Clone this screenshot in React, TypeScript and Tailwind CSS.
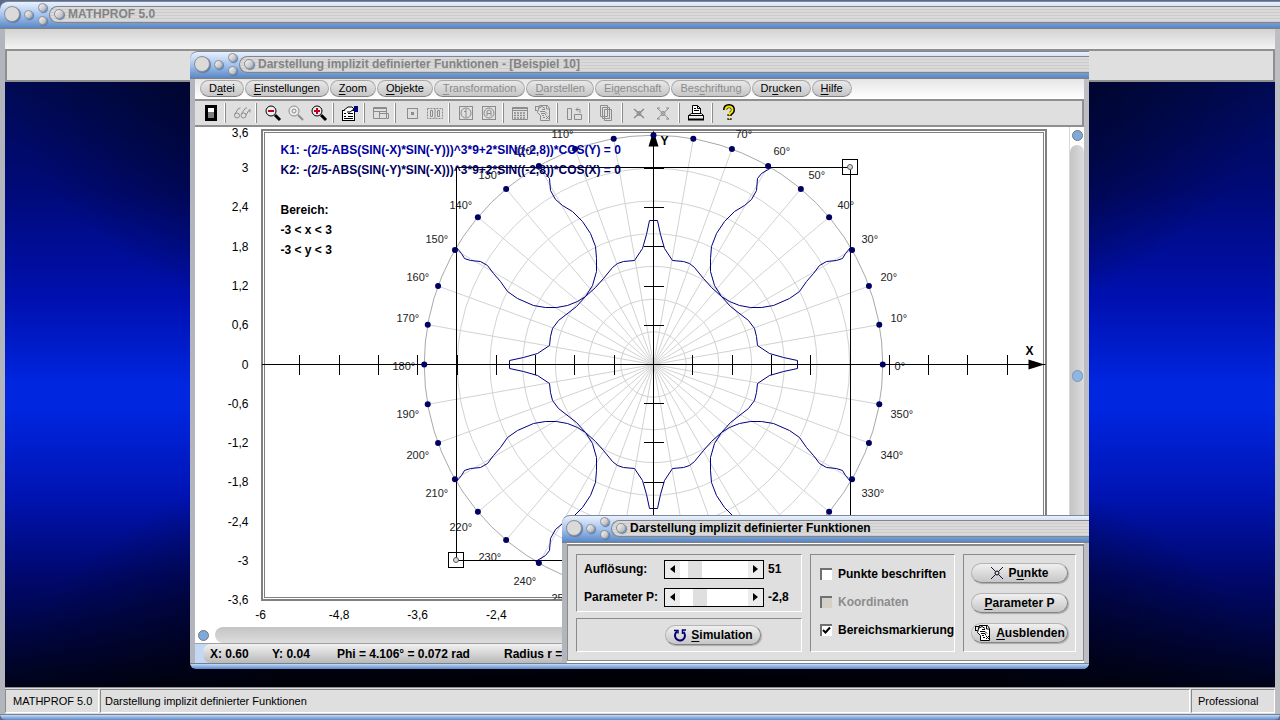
import React, { useState } from 'react';
import clsx from 'clsx';

// ---------------------------------------------------------------- plot data

const UNIT = 65.5; // pixels per unit
const CX = 458.5;
const CY = 237.5;
const RADIUS = 3.5 * UNIT;

const range = (from: number, to: number) =>
  Array.from({ length: to - from + 1 }, (_, i) => from + i);

const comma = (v: number) => String(Math.round(v * 10) / 10).replace('.', ',');

// one quadrant of the curves, relative to the origin
const INNER =
  'M0 -144 L4 -144 L7 -130 L11 -116 L19 -104 L30 -103 L36 -101 L41 -97 L50 -86 L58 -77 L68 -68 L77 -58 L95 -44 L101 -36 L103 -28 L104 -19 L116 -11 L130 -7 L144 -4 L144 0';
const LOOP =
  'M118 -197 L108 -191 L104 -186 L103 -174 L98 -165 L91 -159 L81 -153 L71 -143 L63 -131 L58 -118 L57 -106 L57 -93 L61 -79 L68 -68 L76 -63 L86 -59 L97 -57 L108 -57 L120 -59 L136 -66 L146 -73 L153 -83 L160 -91 L166 -99 L173 -103 L183 -104 L189 -106 L192 -111 L197 -117';

const QUADRANTS = ['scale(1 1)', 'scale(-1 1)', 'scale(1 -1)', 'scale(-1 -1)'];

// label distance from the origin for 0°, 10°, ... 70°
const LABEL_X = [251, 247, 237, 218, 194, 165, 130, 92];
const LABEL_Y = [0, 48, 89, 127, 161, 191, 215, 232];

const polar = (deg: number, r: number) => {
  const a = (deg * Math.PI) / 180;
  return { x: r * Math.cos(a), y: -r * Math.sin(a) };
};

const labelPos = (deg: number) => {
  const folded = deg % 180 > 90 ? 180 - (deg % 180) : deg % 180;
  const i = deg === 180 ? 0 : folded / 10;
  if (i >= LABEL_X.length) return null;
  const sx = deg > 90 && deg < 270 ? -1 : 1;
  const sy = deg < 180 ? -1 : 1;
  return { x: sx * LABEL_X[i] - 10, y: sy * LABEL_Y[i] + 5 };
};

const Plot: React.FC<{ showRegion: boolean }> = ({ showRegion }) => (
  <svg className="block w-full h-full bg-white font-['Liberation_Sans',sans-serif]" role="img" aria-label="Funktionsgraph">
    <defs>
      <clipPath id="plot-area">
        <rect x="-392" y="-236" width="784" height="471" />
      </clipPath>
    </defs>
    <g transform={`translate(${CX} ${CY})`}>
      {/* frame */}
      <g fill="none" stroke="#808080" shapeRendering="crispEdges">
        <rect x="-392" y="-235" width="784" height="470" strokeWidth="2" />
        <rect x="-389.5" y="-232.5" width="779" height="465" />
      </g>

      <g clipPath="url(#plot-area)">
        {/* polar grid */}
        <g fill="none" stroke="#d2d2d2">
          {range(1, 6).map((n) => (
            <circle key={n} r={n * 32.7} />
          ))}
          {range(0, 35).map((n) => {
            const p = polar(n * 10, RADIUS);
            return <line key={n} x2={p.x} y2={p.y} />;
          })}
        </g>
        <circle r={RADIUS} fill="none" stroke="#a8a8a8" />

        {/* angles */}
        <g fontSize="11" fill="#222">
          {range(0, 35).map((n) => {
            const p = labelPos(n * 10);
            return (
              p && (
                <text key={n} x={p.x} y={p.y}>
                  {n * 10}°
                </text>
              )
            );
          })}
        </g>

        {/* axes */}
        <g stroke="#000" shapeRendering="crispEdges">
          <line x1="-392" x2="392" y1="0" y2="0" />
          <line x1="0" x2="0" y1="-232" y2="235" />
          {range(-9, 9).map((n) => (
            <line key={n} x1={n * 39.3} x2={n * 39.3} y1="-10" y2="10" />
          ))}
          {range(-5, 5).map((n) => (
            <line key={n} x1="-10" x2="10" y1={n * 39.2} y2={n * 39.2} />
          ))}
        </g>
        <path d="M391 0 L375 -5 L375 5 Z M0 -234 L-5 -218 L5 -218 Z" />
        <g fontSize="12" fontWeight="bold">
          <text x="372" y="-10">X</text>
          <text x="7" y="-220">Y</text>
        </g>

        {/* curves */}
        <g fill="none" stroke="#000080" strokeLinejoin="round">
          {QUADRANTS.map((t) => (
            <g key={t} transform={t}>
              <path d={INNER} />
              <path d={LOOP} />
            </g>
          ))}
        </g>

        {showRegion && (
          <g fill="none" stroke="#000" shapeRendering="crispEdges">
            <rect x="-197" y="-197" width="394" height="393" />
            {[[197, -197], [-197, 196]].map(([x, y]) => (
              <g key={x}>
                <rect x={x - 8} y={y - 8} width="15" height="15" />
                <circle cx={x - 0.5} cy={y - 0.5} r="2.5" fill="#ddd" stroke="#555" shapeRendering="auto" />
              </g>
            ))}
          </g>
        )}

        <g fill="#000064">
          {range(0, 35).map((n) => {
            const p = polar(n * 10, RADIUS);
            return <circle key={n} cx={p.x} cy={p.y} r="3" />;
          })}
        </g>
      </g>

      {/* legend */}
      <g fontSize="12" fontWeight="bold">
        <text x="-373" y="-211" fill="#0000a0">
          K1: -(2/5-ABS(SIN(-X)*SIN(-Y)))^3*9+2*SIN((-2,8))*COS(Y) = 0
        </text>
        <text x="-373" y="-191" fill="#000060">
          K2: -(2/5-ABS(SIN(-Y)*SIN(-X)))^3*9+2*SIN((-2,8))*COS(X) = 0
        </text>
        <text x="-373" y="-151">Bereich:</text>
        <text x="-373" y="-131">-3 &lt; x &lt; 3</text>
        <text x="-373" y="-111">-3 &lt; y &lt; 3</text>
      </g>

      {/* scale values */}
      <g fontSize="12">
        {range(-6, 6).map((n) => (
          <text key={n} x="-405" y={n === 6 ? -228 : 4 - n * 39.3} textAnchor="end">
            {comma(n * 0.6)}
          </text>
        ))}
        {range(-5, 5).map((n) => (
          <text key={n} x={n * 78.6} y="254" textAnchor="middle">
            {comma(n * 1.2)}
          </text>
        ))}
      </g>
    </g>
  </svg>
);

// ---------------------------------------------------------------- icons

const Icon: React.FC<{ children: React.ReactNode; muted?: boolean }> = ({ children, muted }) => (
  <svg width="18" height="18" viewBox="0 0 18 18" fill="none" stroke={muted ? '#8c8c8c' : '#000'} className="shrink-0">
    {children}
  </svg>
);

const DocIcon: React.FC<{ muted?: boolean }> = ({ muted }) => (
  <Icon muted={muted}>
    <path d="M5.500 1.500h8l2 3v12h-9v-5l-3-3z" fill={muted ? 'none' : '#fff'} />
    <path d="M1.500 2.500h4M1.500 6.500h2M1.500 2v5M4 4.500l4-2 3 2M12.500 2v3h3M8 5.500h3M6 7.500h5l2 2M7 9.500h4l1 2M8 11.500h2M9 13.500h2M12 15l3-3M12 12l3 3" />
  </Icon>
);

const Magnifier: React.FC<{ muted?: boolean; sign?: string }> = ({ muted, sign }) => (
  <Icon muted={muted}>
    <circle cx="7" cy="7" r="5" fill="#eee" />
    {sign ? <path d={sign} stroke="#c00020" strokeWidth="2" /> : <circle cx="7" cy="7" r="2" />}
    <path d="M11 11l5 5" strokeWidth={muted ? 2 : 3} />
  </Icon>
);

const TOOLS: { label: string; icon: React.ReactNode }[][] = [
  [{ label: 'Beenden', icon: <Icon><rect x="4.5" y="2.5" width="9" height="13" fill="#808080" strokeWidth="3" /><path d="M6 4h6v4H6z" fill="#fff" stroke="none" /></Icon> }],
  [{ label: 'Ansicht', icon: <Icon muted><circle cx="4" cy="11.500" r="2.500" /><circle cx="10.500" cy="11.500" r="2.500" /><path d="M1.500 10.500l4-6 2-.5M13 11l3-5 1-.5v3M8.500 9.500l4-5.500h1.500" /></Icon> }],
  [
    { label: 'Verkleinern', icon: <Magnifier sign="M4 7h6" /> },
    { label: 'Originalgröße', icon: <Magnifier muted /> },
    { label: 'Vergrößern', icon: <Magnifier sign="M4 7h6M7 4v6" /> },
  ],
  [{ label: 'Formular', icon: <Icon><rect x="1.500" y="6.500" width="12" height="10" fill="#fff" /><path d="M3 9.500h2M7 9.500h5M3 12.500h2M7 12.500h5M3 14.500h9" /><path d="M3 6l4-3 4 0 2 2-4 3-3 0" fill="#fff" /><path d="M13 2h4v6h-4z" fill="#000080" stroke="none" /></Icon> }],
  [{ label: 'Fenster', icon: <Icon muted><path d="M1.500 3.500h13v11h-13zM1.500 7.500h13M1.500 4.500h13M7.500 7.500v7M7.500 9.500h9v5h-2" /></Icon> }],
  [
    { label: 'Punkt', icon: <Icon muted><rect x="4.500" y="4.500" width="10" height="10" /><path d="M8 8h3v3H8z" fill="#8c8c8c" stroke="none" /></Icon> },
    { label: 'Punkte', icon: <Icon muted><path d="M1.500 4.500h15v10h-15z" strokeDasharray="2 1" /><path d="M4.500 6.500h2v6h-2zM11.500 6.500h2v6h-2zM9 5v9" /></Icon> },
  ],
  [
    { label: 'Info', icon: <Icon muted><rect x="2.500" y="2.500" width="13" height="13" /><circle cx="9" cy="9" r="5" /><path d="M9 5v8M7 7.500h2" /></Icon> },
    { label: 'Achsen', icon: <Icon muted><rect x="2.500" y="2.500" width="13" height="13" /><circle cx="9" cy="9" r="5" /><path d="M7 12V7l2-1 2 1v5M7 9.500h4" /></Icon> },
  ],
  [
    { label: 'Tabelle', icon: <Icon muted><path d="M1.500 3.500h15v12h-15zM1.500 4.500h15M1.500 6.500h15" /><path d="M3 9h12M3 11.500h12M3 14h12" strokeDasharray="2 1" strokeWidth="1.500" /></Icon> },
    { label: 'Protokoll', icon: <DocIcon muted /> },
  ],
  [{ label: 'Drehen', icon: <Icon muted><path d="M2.500 4.500h4v11h-4zM9.500 10.500h7v5h-7zM15 9V5.500h-4M13 3.500l-2 2 2 2" /></Icon> }],
  [{ label: 'Kopieren', icon: <Icon muted><path d="M3.500 1.500h7v11h-7zM5.500 3.500h7v11h-7zM7.500 5.500h7v11h-7z" fill="#dfdfdf" /></Icon> }],
  [
    { label: 'Löschen', icon: <Icon muted><path d="M4 5l10 9M14 5L4 14" strokeWidth="1.500" /><circle cx="9" cy="9.500" r="2" /></Icon> },
    { label: 'Alle löschen', icon: <Icon muted><path d="M3 4l12 11M15 4L3 15M3 4h3M12 4h3M3 15h3M12 15h3" /><circle cx="9" cy="9.500" r="2" /></Icon> },
  ],
  [{ label: 'Drucken', icon: <Icon><path d="M5.500 9.500v-8h5l3 3v5" fill="#fff" /><path d="M10.500 1.500v3h3M7 4.500h2M7 6.500h5" /><path d="M1.500 11.500l3-2h10l2 2v4h-15zM1.500 11.500h15" fill="#eee" /><path d="M1 15.500h16" strokeWidth="2" /></Icon> }],
  [{ label: 'Hilfe', icon: <Icon><path d="M5 6q0-4 4-4t4 4q0 2-3 4" strokeWidth="4" /><path d="M9.500 10v2M9.500 14v2" strokeWidth="4" /><path d="M5.500 6q0-3.500 3.500-3.500t3.500 3.500q0 2-3 3.500v2M9.500 14v1.500" stroke="#f4e400" strokeWidth="2" /></Icon> }],
];

// ---------------------------------------------------------------- window parts

const knob =
  'block shrink-0 rounded-full border border-[#8a909a] bg-gradient-to-br from-[#f8f8f8] to-[#b0b0b0] shadow-[1px_1px_1px_#5a7aa8]';

const TitleBar: React.FC<{ title: string; active?: boolean }> = ({ title, active }) => (
  <div className="h-7 shrink-0 flex items-center pl-1 pb-0.5 rounded-tl-lg border-t border-[#7d8796] border-b border-b-[#808080] bg-gradient-to-b from-[#eaf1fd] via-[#a5c3ee] to-[#5987c4]">
    <button type="button" aria-label="Systemmenü" className="block shrink-0 size-4 rounded-full border border-[#8f8f8f] bg-[#dadada] shadow-[1px_1px_1px_#5a7aa8]" />
    <button type="button" aria-label="Minimieren" className={clsx(knob, 'size-[9px] ml-1')} />
    <div className="flex flex-col gap-1 ml-[5px]">
      <button type="button" aria-label="Maximieren" className={clsx(knob, 'size-[9px]')} />
      <button type="button" aria-label="Schließen" className={clsx(knob, 'size-[9px]')} />
    </div>
    <div className="h-[17px] flex-1 ml-0.5 pl-1 flex items-center rounded-l-full border-y border-l border-[#858585] bg-[repeating-linear-gradient(#dadada_0_2px,#cccccc_2px_3px)]">
      <button type="button" aria-label="Einrollen" className={clsx(knob, 'size-[10px]')} />
      <h2 className={clsx('ml-1 text-[12px] leading-none font-bold whitespace-nowrap', active ? 'text-black' : 'text-[#838383]')}>{title}</h2>
    </div>
  </div>
);

const bottomEdge = 'h-1.5 shrink-0 rounded-b-md bg-gradient-to-b from-[#c4dafa] to-[#5b88c4] border-t border-[#77808c]';
const sideEdge = 'border-x-[5px] border-[#bcbec2] border-l-[#b2b5bb]';

// text with one underlined accelerator key
const Hot: React.FC<{ text: string; at: number }> = ({ text, at }) => (
  <span>
    {text.slice(0, at)}
    <u className="underline-offset-2">{text[at]}</u>
    {text.slice(at + 1)}
  </span>
);

const MENU: { text: string; at: number; disabled?: boolean }[] = [
  { text: 'Datei', at: 1 },
  { text: 'Einstellungen', at: 0 },
  { text: 'Zoom', at: 0 },
  { text: 'Objekte', at: 0 },
  { text: 'Transformation', at: 0, disabled: true },
  { text: 'Darstellen', at: 0, disabled: true },
  { text: 'Eigenschaft', at: 2, disabled: true },
  { text: 'Beschriftung', at: 3, disabled: true },
  { text: 'Drucken', at: 2 },
  { text: 'Hilfe', at: 0 },
];

const MainWindow: React.FC<{ showRegion: boolean }> = ({ showRegion }) => (
  <section className="absolute left-[190px] right-[191px] top-[51px] bottom-[51px] flex flex-col">
    <TitleBar title="Darstellung implizit definierter Funktionen - [Beispiel 10]" />
    <div className={clsx('flex-1 min-h-0 flex flex-col bg-[#dfdfdf]', sideEdge)}>
      <nav className="h-5 shrink-0 flex items-center pl-[5px] pb-0.5 gap-px bg-gradient-to-b from-[#e6e6e6] to-white">
        {MENU.map((m) => (
          <button
            key={m.text}
            type="button"
            disabled={m.disabled}
            className={clsx(
              'h-[17px] px-2 rounded-full border border-[#a8a8a8] border-b-[#808080] bg-gradient-to-b from-[#e8e8e8] to-[#c6c6c6] text-[11px] leading-none',
              m.disabled ? 'text-[#8c8c8c]' : 'text-black'
            )}
          >
            <Hot text={m.text} at={m.at} />
          </button>
        ))}
      </nav>
      <div className="h-7 shrink-0 flex items-center pl-1 border-y-2 border-r-2 border-[#8f8f8f]">
        {TOOLS.map((group, i) => (
          <div
            key={i}
            className={clsx(
              'flex',
              i > 0 && 'pl-1 border-l border-[#8c8c8c] shadow-[-1px_0_0_#fff]',
              i > 8 ? 'ml-1' : i > 0 && 'ml-[3px]'
            )}
          >
            {group.map((t) => (
              <button key={t.label} type="button" aria-label={t.label} className={clsx('h-5 flex items-center justify-center', i > 8 ? 'w-6' : 'w-[23px]')}>
                {t.icon}
              </button>
            ))}
          </div>
        ))}
      </div>
      <div className="flex-1 min-h-0 flex bg-white">
        <div className="flex-1 min-w-0">
          <Plot showRegion={showRegion} />
        </div>
        <div className="w-[15px] shrink-0 flex flex-col items-center pt-[3px] border-l border-[#d8d8d8]">
          <span className="size-[11px] shrink-0 rounded-full border border-[#777] bg-[#7ea9dd]" />
          <span className="flex-1 w-full mt-1 pb-5 rounded-t-lg bg-gradient-to-r from-[#c4c4c4] to-[#dcdcdc] flex items-center justify-center">
            <span className="w-[11px] h-3 rounded-full border border-[#7f93ad] bg-[#8fb5e6]" />
          </span>
        </div>
      </div>
      <div className="h-4 shrink-0 flex items-center pl-[3px] bg-white">
        <span className="size-[11px] shrink-0 rounded-full border border-[#777] bg-[#7ea9dd]" />
        <span className="flex-1 h-full ml-1.5 rounded-l-lg bg-gradient-to-b from-[#c4c4c4] to-[#dcdcdc]" />
      </div>
      <div className="h-5 shrink-0 flex bg-[#c3d8f5] border-t border-[#a0a0a0]">
        <div className="flex-1 ml-2 pl-[7px] flex items-center rounded-l-lg bg-gradient-to-b from-[#f2f2f2] to-[#b9b9b9] text-[12px] leading-none font-bold whitespace-nowrap">
          <span className="w-[62px]">X: 0.60</span>
          <span className="w-[65px]">Y: 0.04</span>
          <span className="w-[167px]">Phi = 4.106° = 0.072 rad</span>
          <span>Radius r =</span>
        </div>
      </div>
    </div>
    <div className={bottomEdge} />
  </section>
);

// ---------------------------------------------------------------- dialog

const groupBox = 'border border-[#8a8a8a] border-r-white border-b-white';
const pill =
  'h-5 flex items-center justify-center gap-1 rounded-full border border-[#b4b4b4] border-r-[#858585] border-b-[#858585] bg-gradient-to-b from-[#f0f0f0] to-[#c6c6c6] shadow-[1px_1px_1px_#aaa]';

interface ScrollFieldProps {
  id: string;
  label: string;
  value: number;
  min: number;
  max: number;
  step: number;
  onChange: (v: number) => void;
}

const ScrollField: React.FC<ScrollFieldProps> = ({ id, label, value, min, max, step, onChange }) => (
  <div className="flex items-center">
    <label htmlFor={id} className="w-20 whitespace-nowrap">{label}</label>
    <div className="w-[100px] h-[19px] flex border border-black bg-white">
      <button type="button" aria-label="Weniger" onClick={() => onChange(Math.max(min, value - step))} className="w-[15px] flex items-center justify-center bg-[#ececec]">
        <svg width="5" height="8" viewBox="0 0 5 8"><path d="M5 0v8L0 4z" /></svg>
      </button>
      <input
        id={id}
        type="range"
        min={min}
        max={max}
        step={step}
        value={value}
        onChange={(e) => onChange(Number(e.target.value))}
        className="appearance-none flex-1 min-w-0 h-full bg-white [&::-webkit-slider-thumb]:appearance-none [&::-webkit-slider-thumb]:w-3.5 [&::-webkit-slider-thumb]:h-[17px] [&::-webkit-slider-thumb]:bg-[#dfdfdf]"
      />
      <button type="button" aria-label="Mehr" onClick={() => onChange(Math.min(max, value + step))} className="w-[15px] flex items-center justify-center bg-[#ececec]">
        <svg width="5" height="8" viewBox="0 0 5 8"><path d="M0 0v8l5-4z" /></svg>
      </button>
    </div>
    <output htmlFor={id} className="ml-1">{comma(value)}</output>
  </div>
);

interface TickProps {
  label: string;
  checked: boolean;
  disabled?: boolean;
  onChange?: (v: boolean) => void;
}

const Tick: React.FC<TickProps> = ({ label, checked, disabled, onChange }) => (
  <label className={clsx('flex items-center gap-1.5 whitespace-nowrap', disabled && 'text-[#8c8c8c]')}>
    <span className="relative size-3 shrink-0">
      <input
        type="checkbox"
        checked={checked}
        disabled={disabled}
        onChange={(e) => onChange?.(e.target.checked)}
        className={clsx('block appearance-none size-3 border-t-2 border-l-2 border-[#707070]', disabled ? 'bg-[#d4d0c8]' : 'bg-white')}
      />
      {checked && (
        <svg className="absolute left-0.5 top-0.5 pointer-events-none" width="9" height="9" viewBox="0 0 9 9" fill="none" stroke="#000" strokeWidth="2">
          <path d="M1 4l2.500 2.500L8 1.500" />
        </svg>
      )}
    </span>
    {label}
  </label>
);

interface DialogProps {
  region: boolean;
  onRegion: (v: boolean) => void;
}

const Dialog: React.FC<DialogProps> = ({ region, onRegion }) => {
  const [resolution, setResolution] = useState(51);
  const [param, setParam] = useState(-2.8);
  const [labels, setLabels] = useState(false);

  return (
    <section className="absolute right-[191px] bottom-[51px] w-[527px] flex flex-col text-[12px] leading-none font-bold">
      <TitleBar title="Darstellung implizit definierter Funktionen" active />
      <div className={clsx('pt-px pb-0.5 bg-white', sideEdge)}>
        <div className="flex gap-2 pl-2 pr-[7px] py-2 border border-t-2 border-[#8a8a8a] bg-[#dfdfdf]">
          <div className="flex-1 flex flex-col gap-1.5">
            <div className={clsx(groupBox, 'h-[58px] pl-[7px] flex flex-col justify-center gap-[9px]')}>
              <ScrollField id="resolution" label="Auflösung:" value={resolution} min={20} max={230} step={1} onChange={setResolution} />
              <ScrollField id="param" label="Parameter P:" value={param} min={-10} max={20} step={0.1} onChange={setParam} />
            </div>
            <div className={clsx(groupBox, 'h-[34px] flex items-center justify-center pl-12')}>
              <button type="button" className={clsx(pill, 'w-24')}>
                <svg width="14" height="14" viewBox="0 0 14 14" fill="none" stroke="#000070" strokeWidth="2">
                  <path d="M4 3.500a5 5 0 1 0 6.500 0.500" />
                  <path d="M1 2.500h4v3M13 2h-3.500v4" strokeWidth="1.500" />
                </svg>
                <Hot text="Simulation" at={0} />
              </button>
            </div>
          </div>
          <div className={clsx(groupBox, 'w-[145px] pl-[9px] pb-0.5 flex flex-col justify-center gap-4')}>
            <Tick label="Punkte beschriften" checked={labels} onChange={setLabels} />
            <Tick label="Koordinaten" checked={false} disabled />
            <Tick label="Bereichsmarkierung" checked={region} onChange={onRegion} />
          </div>
          <div className={clsx(groupBox, 'w-[113px] px-[7px] flex flex-col justify-center gap-[10px]')}>
            <button type="button" className={pill}>
              <svg width="14" height="14" viewBox="0 0 14 14" fill="none" stroke="#10104a">
                <path d="M1 1l4.500 4.500M13 1L8.500 5.500M1 13l4.500-4.500M13 13L8.500 8.500" />
                <circle cx="7" cy="7" r="2" stroke="#000" />
              </svg>
              <Hot text="Punkte" at={1} />
            </button>
            <button type="button" className={pill}>
              <Hot text="Parameter P" at={0} />
            </button>
            <button type="button" className={pill}>
              <DocIcon />
              <Hot text="Ausblenden" at={0} />
            </button>
          </div>
        </div>
      </div>
      <div className={bottomEdge} />
    </section>
  );
};

// ---------------------------------------------------------------- application

const App: React.FC = () => {
  const [region, setRegion] = useState(true);
  const cell = 'flex items-center px-1 border border-[#8a8a8a] border-r-white border-b-white';

  return (
    <div className="relative h-screen min-h-[600px] pt-px flex flex-col overflow-hidden bg-[#5a6b8c] font-['Liberation_Sans',Arial,sans-serif] text-[11px] text-black">
      <TitleBar title="MATHPROF 5.0" />
      <div className={clsx('flex-1 min-h-0 flex flex-col', sideEdge)}>
        <div className="h-5 shrink-0 bg-gradient-to-b from-[#d2d2d2] to-[#f4f4f4]" />
        <div className="h-[33px] shrink-0 border-2 border-[#8f8f8f] bg-[#dfdfdf]" />
        <main className="flex-1 bg-[radial-gradient(ellipse_50%_50%_at_50%_0%,#000c_0%,#000a_55%,#0000_100%),radial-gradient(ellipse_50%_45%_at_50%_100%,#000c_0%,#000a_55%,#0000_100%),linear-gradient(#000a52_0%,#000a78_18%,#0010b0_36%,#0026e0_50%,#0026e0_54%,#0014b4_68%,#00086c_82%,#00042c_96%,#000318_100%)]" />
        <footer className="h-[27px] shrink-0 flex gap-px py-px border-t border-[#8f8f8f] bg-[#dfdfdf]">
          <div className={clsx(cell, 'w-[94px] pl-[7px]')}>MATHPROF 5.0</div>
          <div className={clsx(cell, 'flex-1')}>Darstellung implizit definierter Funktionen</div>
          <div className={clsx(cell, 'w-[84px] pl-1.5')}>Professional</div>
        </footer>
      </div>
      <div className={bottomEdge} />

      <MainWindow showRegion={region} />
      <Dialog region={region} onRegion={setRegion} />
    </div>
  );
};

export default App;
